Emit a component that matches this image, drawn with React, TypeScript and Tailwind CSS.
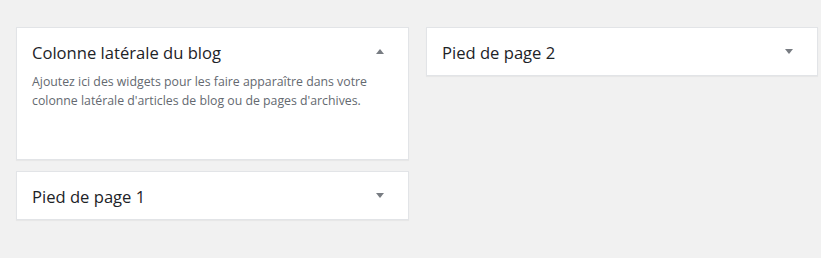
import React from 'react';

const Arrow = ({ up }: { up?: boolean }) => (
  <svg width="8" height="5" viewBox="0 0 8 5" className="block">
    {up ? <polygon points="4,0 8,5 0,5" fill="#787c82" /> : <polygon points="0,0 8,0 4,5" fill="#787c82" />}
  </svg>
);

const SidebarCard = ({ title, open, children }: { title: string; open?: boolean; children?: React.ReactNode }) => (
  <div className="bg-white border border-[#e2e4e7] shadow-[0_1px_1px_rgba(0,0,0,0.04)]">
    <div className="flex items-center justify-between h-[47px] pl-[15px] pr-[24px]">
      <h2 className="text-[16.6px] font-medium text-[#1d2327] pt-[3px]">{title}</h2>
      <Arrow up={open} />
    </div>
    {children}
  </div>
);

export default function App() {
  return (
    <div className="min-h-[258px] bg-[#f1f1f1] pt-[27px] pl-4" style={{ fontFamily: '"Open Sans", "Noto Sans", sans-serif' }}>
      <div className="flex gap-[17px] items-start">
        <div className="w-[393px] shrink-0 flex flex-col gap-[11px]">
          <SidebarCard title="Colonne latérale du blog" open>
            <p className="-mt-[2px] px-[15px] pb-[49px] text-[12.3px] leading-[18.5px] text-[#646970]">
              Ajoutez ici des widgets pour les faire apparaître dans votre colonne latérale d'articles de blog ou de pages d'archives.
            </p>
          </SidebarCard>
          <SidebarCard title="Pied de page 1" />
        </div>
        <div className="w-[392px] shrink-0">
          <SidebarCard title="Pied de page 2" />
        </div>
      </div>
    </div>
  );
}
